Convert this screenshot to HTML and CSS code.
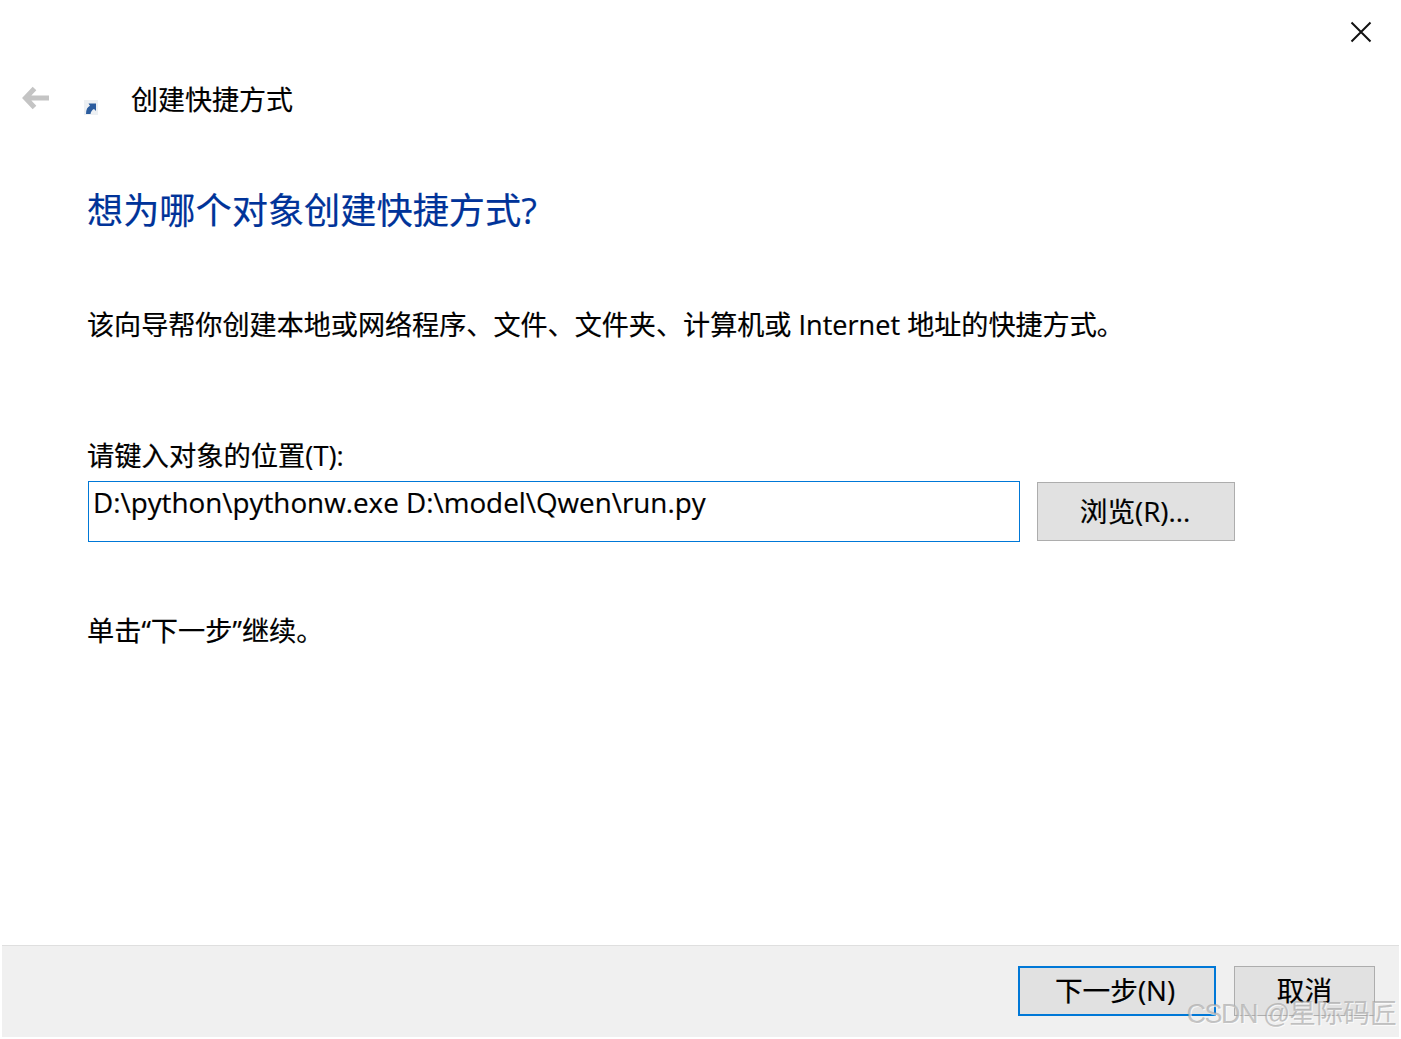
FILE: index.html
```html
<!DOCTYPE html>
<html lang="zh-CN">
<head>
    <meta charset="UTF-8">
    <title>创建快捷方式</title>
    <link rel="stylesheet" href="styles.css">
</head>
<body>
    <div class="dialog">
        <div class="close-row">
            <svg class="close-icon" width="22" height="22" viewBox="0 0 22 22"><path d="M1.500 1.500L20.500 20.500M20.500 1.500L1.500 20.500" stroke="#111" stroke-width="2" fill="none"/></svg>
        </div>
        <div class="nav-row">
            <svg class="back-icon" width="28" height="24" viewBox="0 0 28 24"><path d="M12.500 2.500L3.500 12L12.500 21.500M4 12H27" stroke="#c4c4c4" stroke-width="5" fill="none"/></svg>
            <svg class="app-icon" width="14" height="15" viewBox="0 0 14 15"><rect width="14" height="15" fill="#edf0f3"/><path d="M2 14C2 9.500 3.500 7 6 5.800L4.500 3.500H12V11L10 9C8 10 7 11.500 6.500 14Z" fill="#2b5c9e"/></svg>
            <span class="nav-title">创建快捷方式</span>
        </div>
        <div class="content">
            <h1 class="heading">想为哪个对象创建快捷方式?</h1>
            <p class="desc">该向导帮你创建本地或网络程序、文件、文件夹、计算机或 Internet 地址的快捷方式。</p>
            <label class="field-label" for="target">请键入对象的位置(T):</label>
            <div class="field-row">
                <div class="text-input" id="target">D:\python\pythonw.exe D:\model\Qwen\run.py</div>
                <button class="btn browse">浏览(R)...</button>
            </div>
            <p class="hint">单击“下一步”继续。</p>
        </div>
        <div class="footer">
            <button class="btn primary">下一步(N)</button>
            <button class="btn cancel">取消</button>
        </div>
    </div>
    <div class="watermark"><span class="watermark-latin">CSDN @</span>星际码匠</div>
</body>
</html>
```

FILE: styles.css
```css
* {
    margin: 0;
    padding: 0;
    box-sizing: border-box;
}

html, body {
    width: 100%;
    height: 100%;
    overflow: hidden;
}

body {
    background: #fff;
    color: #000;
    font-family: "Open Sans", "Noto Sans CJK SC", sans-serif;
    font-size: 27px;
    -webkit-text-stroke: 0.2px currentColor;
}

.dialog {
    height: 1039px;
    display: flex;
    flex-direction: column;
}

.close-row {
    height: 21px;
    margin-top: 21px;
    display: flex;
    justify-content: flex-end;
    padding-right: 29px;
}

.nav-row {
    display: flex;
    align-items: center;
    height: 40px;
    margin-top: 36px;
    padding-left: 22px;
}

.app-icon {
    margin-left: 34px;
    margin-top: 19px;
}

.nav-title {
    margin-left: 33px;
}

.content {
    flex: 1;
    padding-left: 88px;
}

.heading {
    font-size: 36.2px;
    font-weight: 400;
    color: #003399;
    margin-top: 67px;
    line-height: 50px;
    margin-left: -1px;
}

.desc {
    margin-top: 70px;
    line-height: 40px;
    font-size: 27.1px;
    margin-left: -1px;
}

.field-label {
    display: block;
    margin-top: 91px;
    line-height: 40px;
    font-size: 27.3px;
    margin-left: -1px;
}

.field-row {
    display: flex;
    align-items: center;
    margin-top: 5px;
}

.text-input {
    width: 932px;
    height: 61px;
    border: 1px solid #0078d7;
    padding-left: 4px;
    line-height: 40px;
    font-size: 27.8px;
}

.btn {
    font-family: inherit;
    font-size: 27.7px;
    color: #000;
    background: #e1e1e1;
    border: 1px solid #adadad;
    padding-bottom: 3px;
    -webkit-text-stroke: 0.2px currentColor;
}

.browse {
    width: 198px;
    height: 59px;
    margin-left: 17px;
    padding-right: 2px;
}

.hint {
    margin-top: 69px;
    margin-left: -1px;
    line-height: 40px;
    font-size: 27.2px;
}

.footer {
    height: 92px;
    margin: 0 2px 2px;
    background: #f0f0f0;
    border-top: 1px solid #dfdfdf;
    display: flex;
    align-items: flex-start;
    justify-content: flex-end;
    gap: 18px;
    padding: 20px 24px 0 0;
}

.primary {
    width: 198px;
    height: 50px;
    border: 2px solid #0078d7;
    padding-right: 4px;
    padding-bottom: 4px;
}

.cancel {
    width: 141px;
    height: 50px;
    padding-bottom: 4px;
}

.watermark {
    position: absolute;
    right: 4px;
    bottom: 8px;
    font-family: "Liberation Sans", "Noto Sans CJK SC", sans-serif;
    font-size: 27px;
    color: rgba(160, 160, 160, 0.6);
    -webkit-text-stroke: 0;
    text-shadow: 1px 1px 0 rgba(255, 255, 255, 0.7);
}

.watermark-latin {
    letter-spacing: -1.5px;
}
```
